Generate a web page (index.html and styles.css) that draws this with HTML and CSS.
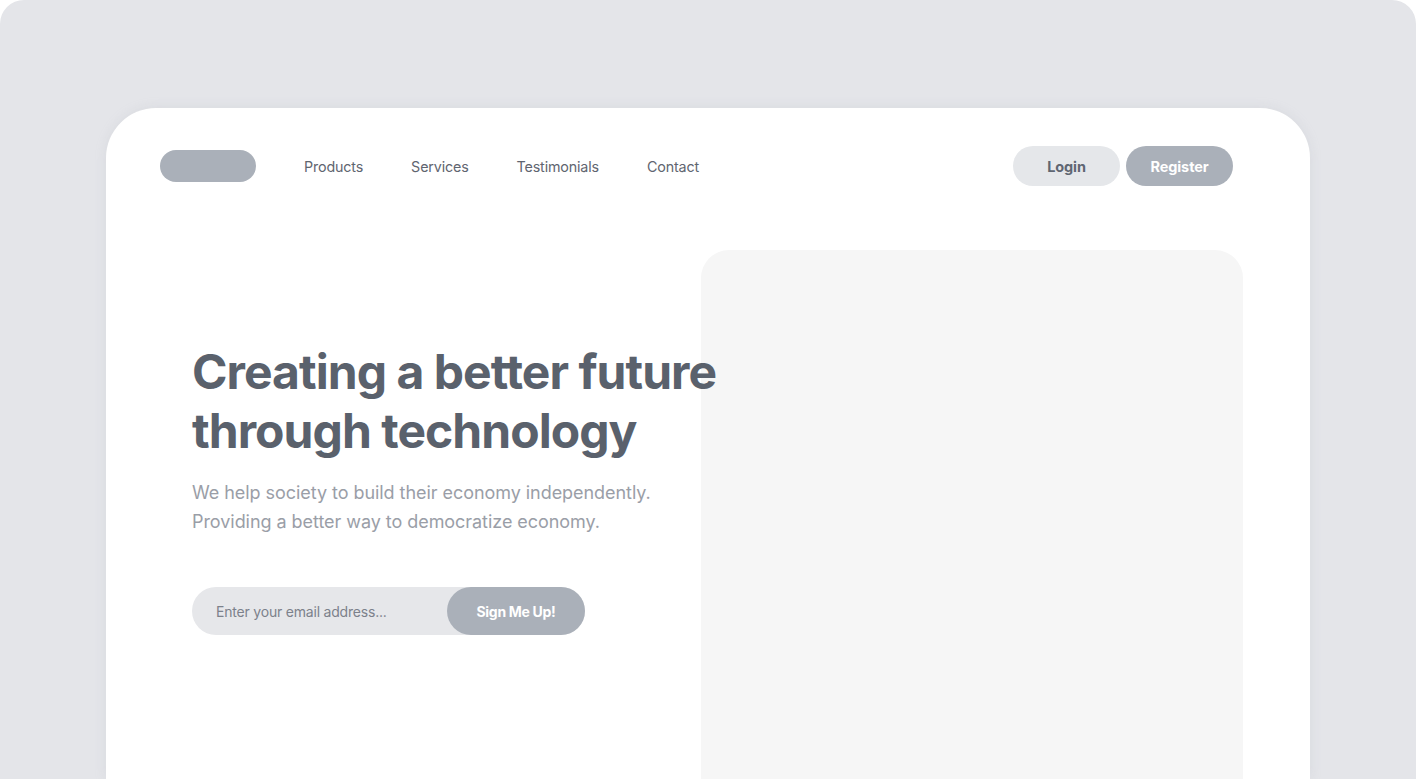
FILE: index.html
```html
<!DOCTYPE html>
<html lang="en">
<head>
<meta charset="utf-8">
<title>Landing</title>
<link rel="stylesheet" href="styles.css">
</head>
<body>
<div class="frame">
  <div class="card">
    <header class="nav">
      <div class="nav-left">
        <div class="logo"></div>
        <nav class="links">
          <a href="#">Products</a>
          <a href="#">Services</a>
          <a href="#">Testimonials</a>
          <a href="#">Contact</a>
        </nav>
      </div>
      <div class="nav-right">
        <button class="btn btn-login">Login</button>
        <button class="btn btn-register">Register</button>
      </div>
    </header>
    <section class="hero">
      <div class="hero-text">
        <h1>Creating a better future<br>through technology</h1>
        <p>We help society to build their economy independently.<br>Providing a better way to democratize economy.</p>
        <form class="signup">
          <input type="email" placeholder="Enter your email address...">
          <button type="button" class="signup-btn">Sign Me Up!</button>
        </form>
      </div>
      <div class="hero-media"></div>
    </section>
  </div>
</div>
</body>
</html>
```
FILE: styles.css
```css
* { box-sizing: border-box; }
html, body { margin: 0; padding: 0; background: #ffffff; }
body {
  font-family: Inter, "Noto Sans", "Liberation Sans", sans-serif;
  width: 1416px;
  height: 779px;
  overflow: hidden;
}
.frame {
  height: 779px;
  background: #e4e5e9;
  border-radius: 24px 24px 0 0;
  padding: 108px 106px 0 106px;
}
.card {
  height: 100%;
  background: #ffffff;
  border-radius: 50px 50px 0 0;
  padding: 38px 77px 0 54px;
  box-shadow: 0 0 12px rgba(160, 165, 175, 0.18);
  display: flex;
  flex-direction: column;
}
.nav {
  display: flex;
  align-items: center;
  justify-content: space-between;
  height: 40px;
}
.nav-left { display: flex; align-items: center; }
.logo {
  width: 96px;
  height: 32px;
  border-radius: 16px;
  background: #aab0b9;
  margin-right: 48px;
}
.links { display: flex; gap: 48px; }
.links a {
  color: #5f6570;
  text-decoration: none;
  font-size: 14.3px;
  letter-spacing: -0.15px;
}
.nav-right { display: flex; gap: 6px; }
.btn {
  width: 107px;
  height: 40px;
  border: 0;
  border-radius: 20px;
  font-family: inherit;
  font-size: 14.5px;
  font-weight: 700;
  letter-spacing: -0.1px;
}
.btn-login { background: #e5e7ea; color: #5f6672; }
.btn-register { background: #aab0b9; color: #ffffff; }
.hero {
  flex: 1;
  display: flex;
  margin-top: 64px;
  margin-right: -10px;
}
.hero-text {
  width: 541px;
  padding: 92px 0 0 32px;
  position: relative;
  z-index: 1;
}
h1 {
  margin: 0;
  font-size: 48px;
  line-height: 59px;
  font-weight: 700;
  color: #5a616c;
  letter-spacing: -0.95px;
  white-space: nowrap;
}
p {
  margin: 18px 0 0;
  font-size: 18px;
  line-height: 29px;
  color: #9a9ea7;
  letter-spacing: -0.05px;
  white-space: nowrap;
}
.signup {
  margin-top: 51px;
  width: 393px;
  height: 48px;
  display: flex;
  background: #e6e7ea;
  border-radius: 24px;
}
.signup input {
  flex: 1;
  min-width: 0;
  border: 0;
  background: transparent;
  padding: 0 0 0 24px;
  font-family: inherit;
  font-size: 14px;
  color: #5d636e;
  letter-spacing: -0.2px;
  outline: none;
}
.signup input::placeholder { color: #7c818b; }
.signup-btn {
  width: 138px;
  border: 0;
  border-radius: 24px;
  background: #aab0b9;
  color: #ffffff;
  font-family: inherit;
  font-size: 14px;
  font-weight: 700;
  letter-spacing: -0.3px;
}
.hero-media {
  flex: 1;
  background: #f6f6f6;
  border-radius: 28px 28px 0 0;
}
```
